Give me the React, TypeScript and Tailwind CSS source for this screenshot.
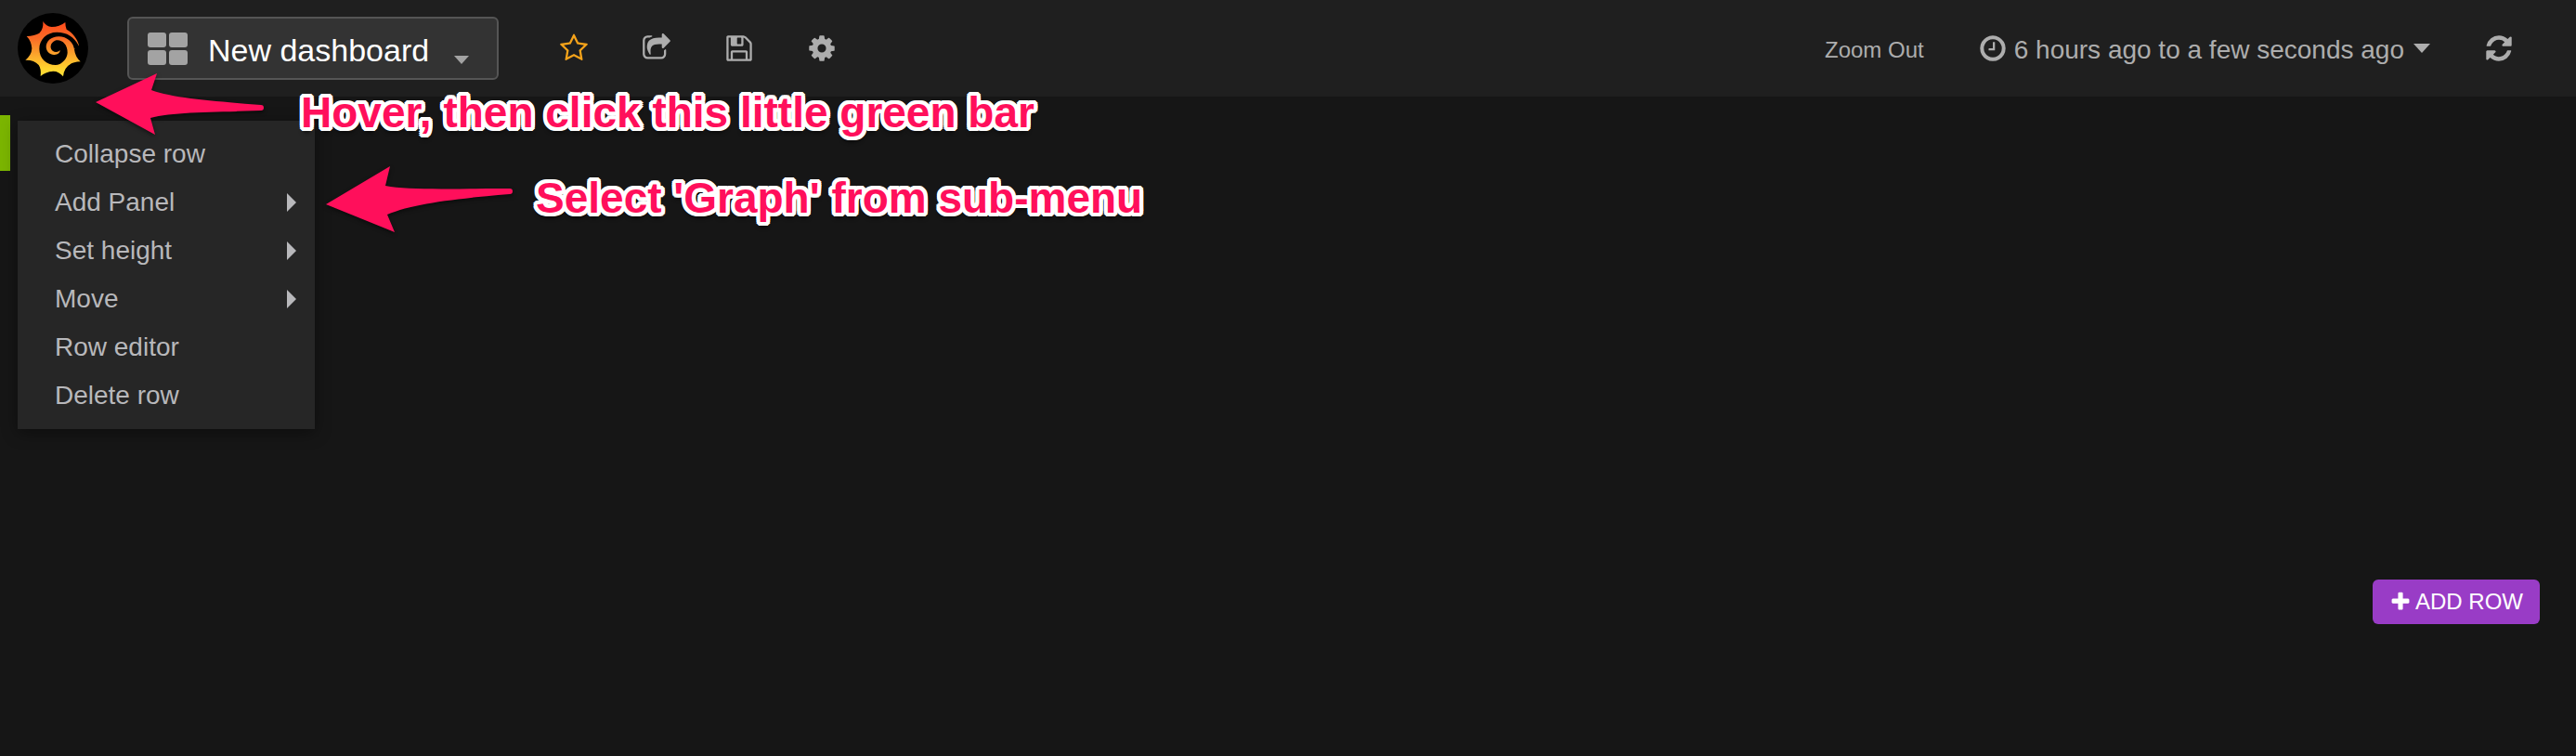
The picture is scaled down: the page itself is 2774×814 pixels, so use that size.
import React from "react";

const PATHS = {
  star: "M1201 1004l306-297-422-62-189-382-189 382-422 62 306 297-73 421 378-199 377 199zm527-357q0 22-26 48l-363 354 86 500q1 7 1 20 0 50-41 50-19 0-40-12l-449-236-449 236q-22 12-40 12-21 0-31.5-14.5t-10.5-35.5q0-6 2-20l86-500-364-354q-25-27-25-48 0-37 56-46l502-73 225-455q19-41 49-41t49 41l225 455 502 73q56 9 56 46z",
  share: "M1472 989v259q0 119-84.5 203.5t-203.5 84.5h-832q-119 0-203.5-84.5t-84.5-203.5v-832q0-119 84.5-203.5t203.5-84.5h255q13 0 22.5 9.5t9.5 22.5q0 27-26 32-77 26-133 60-10 4-16 4h-112q-66 0-113 47t-47 113v832q0 66 47 113t113 47h832q66 0 113-47t47-113v-214q0-19 18-29 28-13 54-37 16-16 35-8 21 9 21 29zm237-496l-384 384q-18 19-45 19-12 0-25-5-39-17-39-59v-192h-160q-323 0-438 131-119 137-74 473 3 23-20 34-8 2-12 2-16 0-26-13-10-14-21-31t-39.5-68.5-49.5-99.5-38.5-114-17.5-122q0-49 3.5-91t14-90 28-88 47-81.5 68.5-74 94.5-61.5 124.5-48.5 159.5-30.5 196.5-11h160v-192q0-42 39-59 13-5 25-5 26 0 45 19l384 384q19 19 19 45t-19 45z",
  save: "M512 1536h768v-384h-768v384zm896 0h128v-896q0-14-10-38.5t-20-34.5l-281-281q-10-10-34-20t-39-10v416q0 40-28 68t-68 28h-576q-40 0-68-28t-28-68v-416h-128v1280h128v-416q0-40 28-68t68-28h832q40 0 68 28t28 68v416zm-384-928v-320q0-13-9.5-22.5t-22.5-9.5h-192q-13 0-22.5 9.5t-9.5 22.5v320q0 13 9.5 22.5t22.5 9.5h192q13 0 22.5-9.5t9.5-22.5zm640 32v928q0 40-28 68t-68 28h-1344q-40 0-68-28t-28-68v-1344q0-40 28-68t68-28h928q40 0 88 20t76 48l280 280q28 28 48 76t20 88z",
  cog: "M1152 896q0-106-75-181t-181-75-181 75-75 181 75 181 181 75 181-75 75-181zm512-109v222q0 12-8 23t-20 13l-185 28q-19 54-39 91 35 50 107 138 10 12 10 25t-9 23q-27 37-99 108t-94 71q-12 0-26-9l-138-108q-44 23-91 38-16 136-29 186-7 28-36 28h-222q-14 0-24.5-8.5t-11.5-21.5l-28-184q-49-16-90-37l-141 107q-10 9-25 9-14 0-25-11-126-114-165-168-7-10-7-23 0-12 8-23 15-21 51-66.5t54-70.5q-27-50-41-99l-183-27q-13-2-21-12.5t-8-23.5v-222q0-12 8-23t19-13l186-28q14-46 39-92-40-57-107-138-10-12-10-24 0-10 9-23 26-36 98.5-107.5t94.5-71.5q13 0 26 10l138 107q44-23 91-38 16-136 29-186 7-28 36-28h222q14 0 24.5 8.5t11.5 21.5l28 184q49 16 90 37l142-107q9-9 24-9 13 0 25 10 129 119 165 170 7 8 7 22 0 12-8 23-15 21-51 66.5t-54 70.5q26 50 41 98l183 28q13 2 21 12.5t8 23.5z",
  clock: "M1024 544v448q0 14-9 23t-23 9h-320q-14 0-23-9t-9-23v-64q0-14 9-23t23-9h224v-352q0-14 9-23t23-9h64q14 0 23 9t9 23zm416 352q0-148-73-273t-198-198-273-73-273 73-198 198-73 273 73 273 198 198 273 73 273-73 198-198 73-273zm224 0q0 209-103 385.5t-279.5 279.5-385.5 103-385.5-103-279.5-279.5-103-385.5 103-385.5 279.5-279.5 385.5-103 385.5 103 279.5 279.5 103 385.5z",
  refresh: "M1639 1056q0 5-1 7-64 268-268 434.5t-478 166.5q-146 0-282.5-55t-243.5-157l-129 129q-19 19-45 19t-45-19-19-45v-448q0-26 19-45t45-19h448q26 0 45 19t19 45-19 45l-137 137q71 66 161 102t187 36q134 0 250-65t186-179q11-17 53-117 8-23 30-23h192q13 0 22.5 9.5t9.5 22.5zm25-800v448q0 26-19 45t-45 19h-448q-26 0-45-19t-19-45 19-45l138-138q-148-137-349-137-134 0-250 65t-186 179q-11 17-53 117-8 23-30 23h-199q-13 0-22.5-9.5t-9.5-22.5v-7q65-268 270-434.5t480-166.5q146 0 284 55.5t245 156.5l130-129q19-19 45-19t45 19 19 45z",
  plus: "M1600 736v192q0 40-28 68t-68 28h-416v416q0 40-28 68t-68 28h-192q-40 0-68-28t-28-68v-416h-416q-40 0-68-28t-28-68v-192q0-40 28-68t68-28h416v-416q0-40 28-68t68-28h192q40 0 68 28t28 68v416h416q40 0 68 28t28 68z",
};

function Icon({ name, className = "size-8" }: { name: keyof typeof PATHS; className?: string }) {
  return (
    <svg viewBox="0 0 1792 1792" fill="currentColor" aria-hidden="true" className={`shrink-0 ${className}`}>
      <path d={PATHS[name]} />
    </svg>
  );
}

function Logo() {
  return (
    <svg viewBox="57 40 228 228" className="size-full" aria-hidden="true">
      <defs>
        <linearGradient id="sun" gradientUnits="userSpaceOnUse" x1="0" y1="68" x2="0" y2="245">
          <stop offset="0" stopColor="#ff4a1c" />
          <stop offset="0.3" stopColor="#f96a26" />
          <stop offset="0.6" stopColor="#fba52c" />
          <stop offset="0.85" stopColor="#ffd22e" />
          <stop offset="1" stopColor="#fde23a" />
        </linearGradient>
      </defs>
      <circle cx="171" cy="154" r="114" fill="#000" />
      <path
        fill="url(#sun)"
        d="M139 67Q149 84 167 85Q192 85 211 70Q211 84 215 93C236 104 250 124 255 144L240 158Q243 182 260 197Q237 198 226 206Q207 217 204 245Q190 228 172 228Q146 230 131 244Q134 221 125 208Q110 191 82 192Q102 176 103 154Q101 130 86 115Q112 114 127 105Q141 93 139 67Z"
      />
      <path fill="#000" d="M254 145C240 117 216 102 184 102C150 102 127 126 127 156C127 186 150 208 180 208C212 208 238 185 238 155L256 160Z" />
      <path
        fill="url(#sun)"
        d="M240 162C240 134 215 116 190 116C165 116 149 132 149 149C149 165 162 176 176 175C187 174 194 169 194 160C188 167 178 168 170 162C159 153 163 135 178 129C197 123 219 140 218 168C217 187 203 201 186 209L225 207Z"
      />
    </svg>
  );
}

function Caret() {
  return (
    <svg viewBox="0 0 10 20" className="h-5 w-[10px]" fill="#b8b8bb" aria-hidden="true">
      <path d="M0 0L10 10L0 20Z" />
    </svg>
  );
}

const TOOLS: { name: keyof typeof PATHS; label: string; color: string }[] = [
  { name: "star", label: "Star dashboard", color: "text-[#f5a31a]" },
  { name: "share", label: "Share dashboard", color: "text-[#adadad]" },
  { name: "save", label: "Save dashboard", color: "text-[#adadad]" },
  { name: "cog", label: "Settings", color: "text-[#adadad]" },
];

const MENU = [
  { label: "Collapse row", sub: false },
  { label: "Add Panel", sub: true },
  { label: "Set height", sub: true },
  { label: "Move", sub: true },
  { label: "Row editor", sub: false },
  { label: "Delete row", sub: false },
];

const NOTE =
  "pointer-events-none absolute whitespace-nowrap text-[46px] leading-[52px] font-bold text-[#ff0f5b] [text-shadow:4px_0_#fff,-4px_0_#fff,0_4px_#fff,0_-4px_#fff,3px_3px_#fff,-3px_3px_#fff,3px_-3px_#fff,-3px_-3px_#fff,4px_2px_#fff,-4px_2px_#fff,4px_-2px_#fff,-4px_-2px_#fff,2px_4px_#fff,-2px_4px_#fff,2px_-4px_#fff,-2px_-4px_#fff,2px_0_#fff,-2px_0_#fff,0_2px_#fff,0_-2px_#fff,0_5px_5px_#000]";
const ARROW = "pointer-events-none absolute overflow-visible [filter:drop-shadow(0_2px_2px_rgb(0_0_0/0.5))]";

export default function App() {
  return (
    <div className="relative min-h-screen bg-[#161616] font-['Liberation_Sans',Arial,sans-serif] text-[28px] leading-8 text-[#adadad]">
      <header className="flex h-[104px] items-center bg-[#1f1f1f] pr-[67px] pl-[19px]">
        <a href="#home" aria-label="Home" className="block size-[76px]">
          <Logo />
        </a>
        <button
          type="button"
          className="ml-[42px] flex h-[68px] items-center rounded-md border-2 border-[#555] bg-[#333] pr-[30px] pl-5 text-[34px] leading-10 text-white"
        >
          <span className="grid grid-cols-2 gap-[3px]" aria-hidden="true">
            {[0, 1, 2, 3].map((i) => (
              <span key={i} className="h-4 w-5 rounded-[3px] bg-[#a3a3a3]" />
            ))}
          </span>
          <span className="ml-[22px] pt-[3px]">New dashboard</span>
          <svg viewBox="0 0 16 9" className="mt-6 ml-[27px] h-[9px] w-4" fill="#a3a3a3" aria-hidden="true">
            <path d="M0 0H16L8 9Z" />
          </svg>
        </button>
        <nav className="ml-[65px] flex items-center gap-[57px]" aria-label="Dashboard">
          {TOOLS.map((t) => (
            <button key={t.name} type="button" aria-label={t.label} className={t.color}>
              <Icon name={t.name} />
            </button>
          ))}
        </nav>
        <div className="ml-auto flex items-center">
          <button type="button" className="pt-[3px] text-2xl">
            Zoom Out
          </button>
          <button type="button" className="ml-[58px] flex items-center">
            <Icon name="clock" />
            <span className="ml-[7px] pt-[3px]">6 hours ago to a few seconds ago</span>
            <svg viewBox="0 0 18 10" className="ml-[10px] h-[10px] w-[18px]" fill="currentColor" aria-hidden="true">
              <path d="M0 0H18L9 10Z" />
            </svg>
          </button>
          <button type="button" aria-label="Refresh" className="ml-[58px]">
            <Icon name="refresh" />
          </button>
        </div>
      </header>

      <main className="pt-5">
        <section className="relative min-h-[500px]">
          <button type="button" aria-label="Row menu" className="block h-[60px] w-[11px] bg-[#7bb500]" />
          <ul className="absolute top-[6px] left-[19px] w-80 bg-[#262626] py-[10px] text-[#b8b8bb] shadow-[0_4px_16px_rgb(0_0_0/0.4)]">
            {MENU.map((m) => (
              <li key={m.label}>
                <button type="button" className="flex h-[52px] w-full items-center justify-between pr-5 pl-10">
                  {m.label}
                  {m.sub && <Caret />}
                </button>
              </li>
            ))}
          </ul>
        </section>
        <div className="flex justify-end pr-[39px]">
          <button
            type="button"
            className="flex h-12 items-center gap-1 rounded-md bg-[#993cc6] px-[18px] text-2xl leading-7 text-white"
          >
            <Icon name="plus" className="size-6" />
            ADD ROW
          </button>
        </div>
      </main>

      <svg viewBox="0 0 184 68" className={`top-[78px] left-[102px] h-[68px] w-[184px] ${ARROW}`} aria-hidden="true">
        <path fill="#ff0f5b" d="M1 32L67 1L61 19C85 28 130 31 179 35A3 3 0 0 1 179 41C130 43 85 42 60 49L65 67Z" />
      </svg>
      <p className={`top-[95px] left-[324px] ${NOTE}`}>Hover, then click this little green bar</p>
      <svg viewBox="0 0 204 74" className={`top-[178px] left-[350px] h-[74px] w-[204px] ${ARROW}`} aria-hidden="true">
        <path fill="#ff0f5b" d="M1 42L70 1L65 22C90 27 135 25 199 25A3 3 0 0 1 199 31C140 36 95 41 67 53L75 72Z" />
      </svg>
      <p className={`top-[187px] left-[577px] ${NOTE}`}>Select 'Graph' from sub-menu</p>
    </div>
  );
}
